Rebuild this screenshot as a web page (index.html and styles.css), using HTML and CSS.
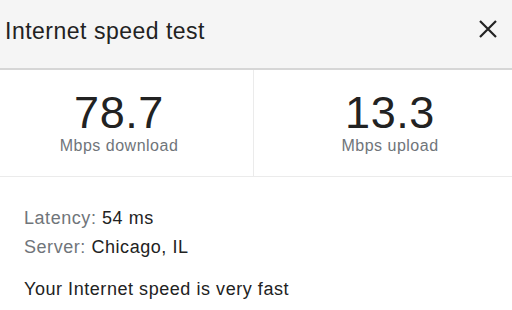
FILE: index.html
```html
<!DOCTYPE html>
<html lang="en">
<head>
<meta charset="utf-8">
<title>Internet speed test</title>
<link rel="stylesheet" href="styles.css">
</head>
<body>
<div class="card">
  <header class="header">
    <h1 class="title">Internet speed test</h1>
    <button class="close" aria-label="Close">
      <svg width="20" height="20" viewBox="0 0 20 20"><path d="M2 2 L18 18 M18 2 L2 18" stroke="#222" stroke-width="2.2" fill="none"/></svg>
    </button>
  </header>
  <section class="stats">
    <div class="stat stat-down">
      <div class="value">78.7</div>
      <div class="unit">Mbps download</div>
    </div>
    <div class="stat stat-up">
      <div class="value">13.3</div>
      <div class="unit">Mbps upload</div>
    </div>
  </section>
  <section class="details">
    <div class="row"><span class="label">Latency:</span> 54 ms</div>
    <div class="row"><span class="label">Server:</span> Chicago, IL</div>
    <p class="verdict">Your Internet speed is very fast</p>
  </section>
</div>
</body>
</html>
```

FILE: styles.css
```css
* { box-sizing: border-box; }
html, body { margin: 0; padding: 0; background: #fff; }
body {
  font-family: "Liberation Sans", Arial, sans-serif;
  color: #222;
  width: 512px;
  height: 310px;
  overflow: hidden;
}
.header {
  height: 70px;
  background: #f5f5f5;
  border-bottom: 2px solid #d6d6d6;
  display: flex;
  align-items: flex-start;
  padding: 18px 14px 0 5px;
}
.title {
  margin: 0;
  font-weight: normal;
  font-size: 23px;
  line-height: 26px;
  letter-spacing: 0.5px;
  color: #222;
}
.close {
  margin-left: auto;
  margin-top: 1px;
  border: 0;
  padding: 0;
  background: transparent;
  width: 20px;
  height: 20px;
  display: block;
}
.close svg { display: block; }
.stats {
  display: grid;
  grid-template-columns: 254px 1fr;
  border-bottom: 1px solid #ebebeb;
}
.stat {
  padding-top: 20px;
  padding-bottom: 20px;
  text-align: center;
}
.stat-down {
  border-right: 1px solid #ebebeb;
  padding-right: 15px;
}
.stat-up { padding-left: 14px; }
.value {
  font-size: 45px;
  line-height: 46px;
  letter-spacing: 0.6px;
  color: #222;
}
.unit {
  font-size: 16px;
  line-height: 20px;
  letter-spacing: 0.5px;
  color: #70757a;
}
.details {
  padding: 27px 0 0 24px;
  font-size: 18px;
  letter-spacing: 0.55px;
}
.row { line-height: 29px; }
.label { color: #70757a; }
.verdict {
  margin: 13px 0 0;
  line-height: 29px;
}
```
